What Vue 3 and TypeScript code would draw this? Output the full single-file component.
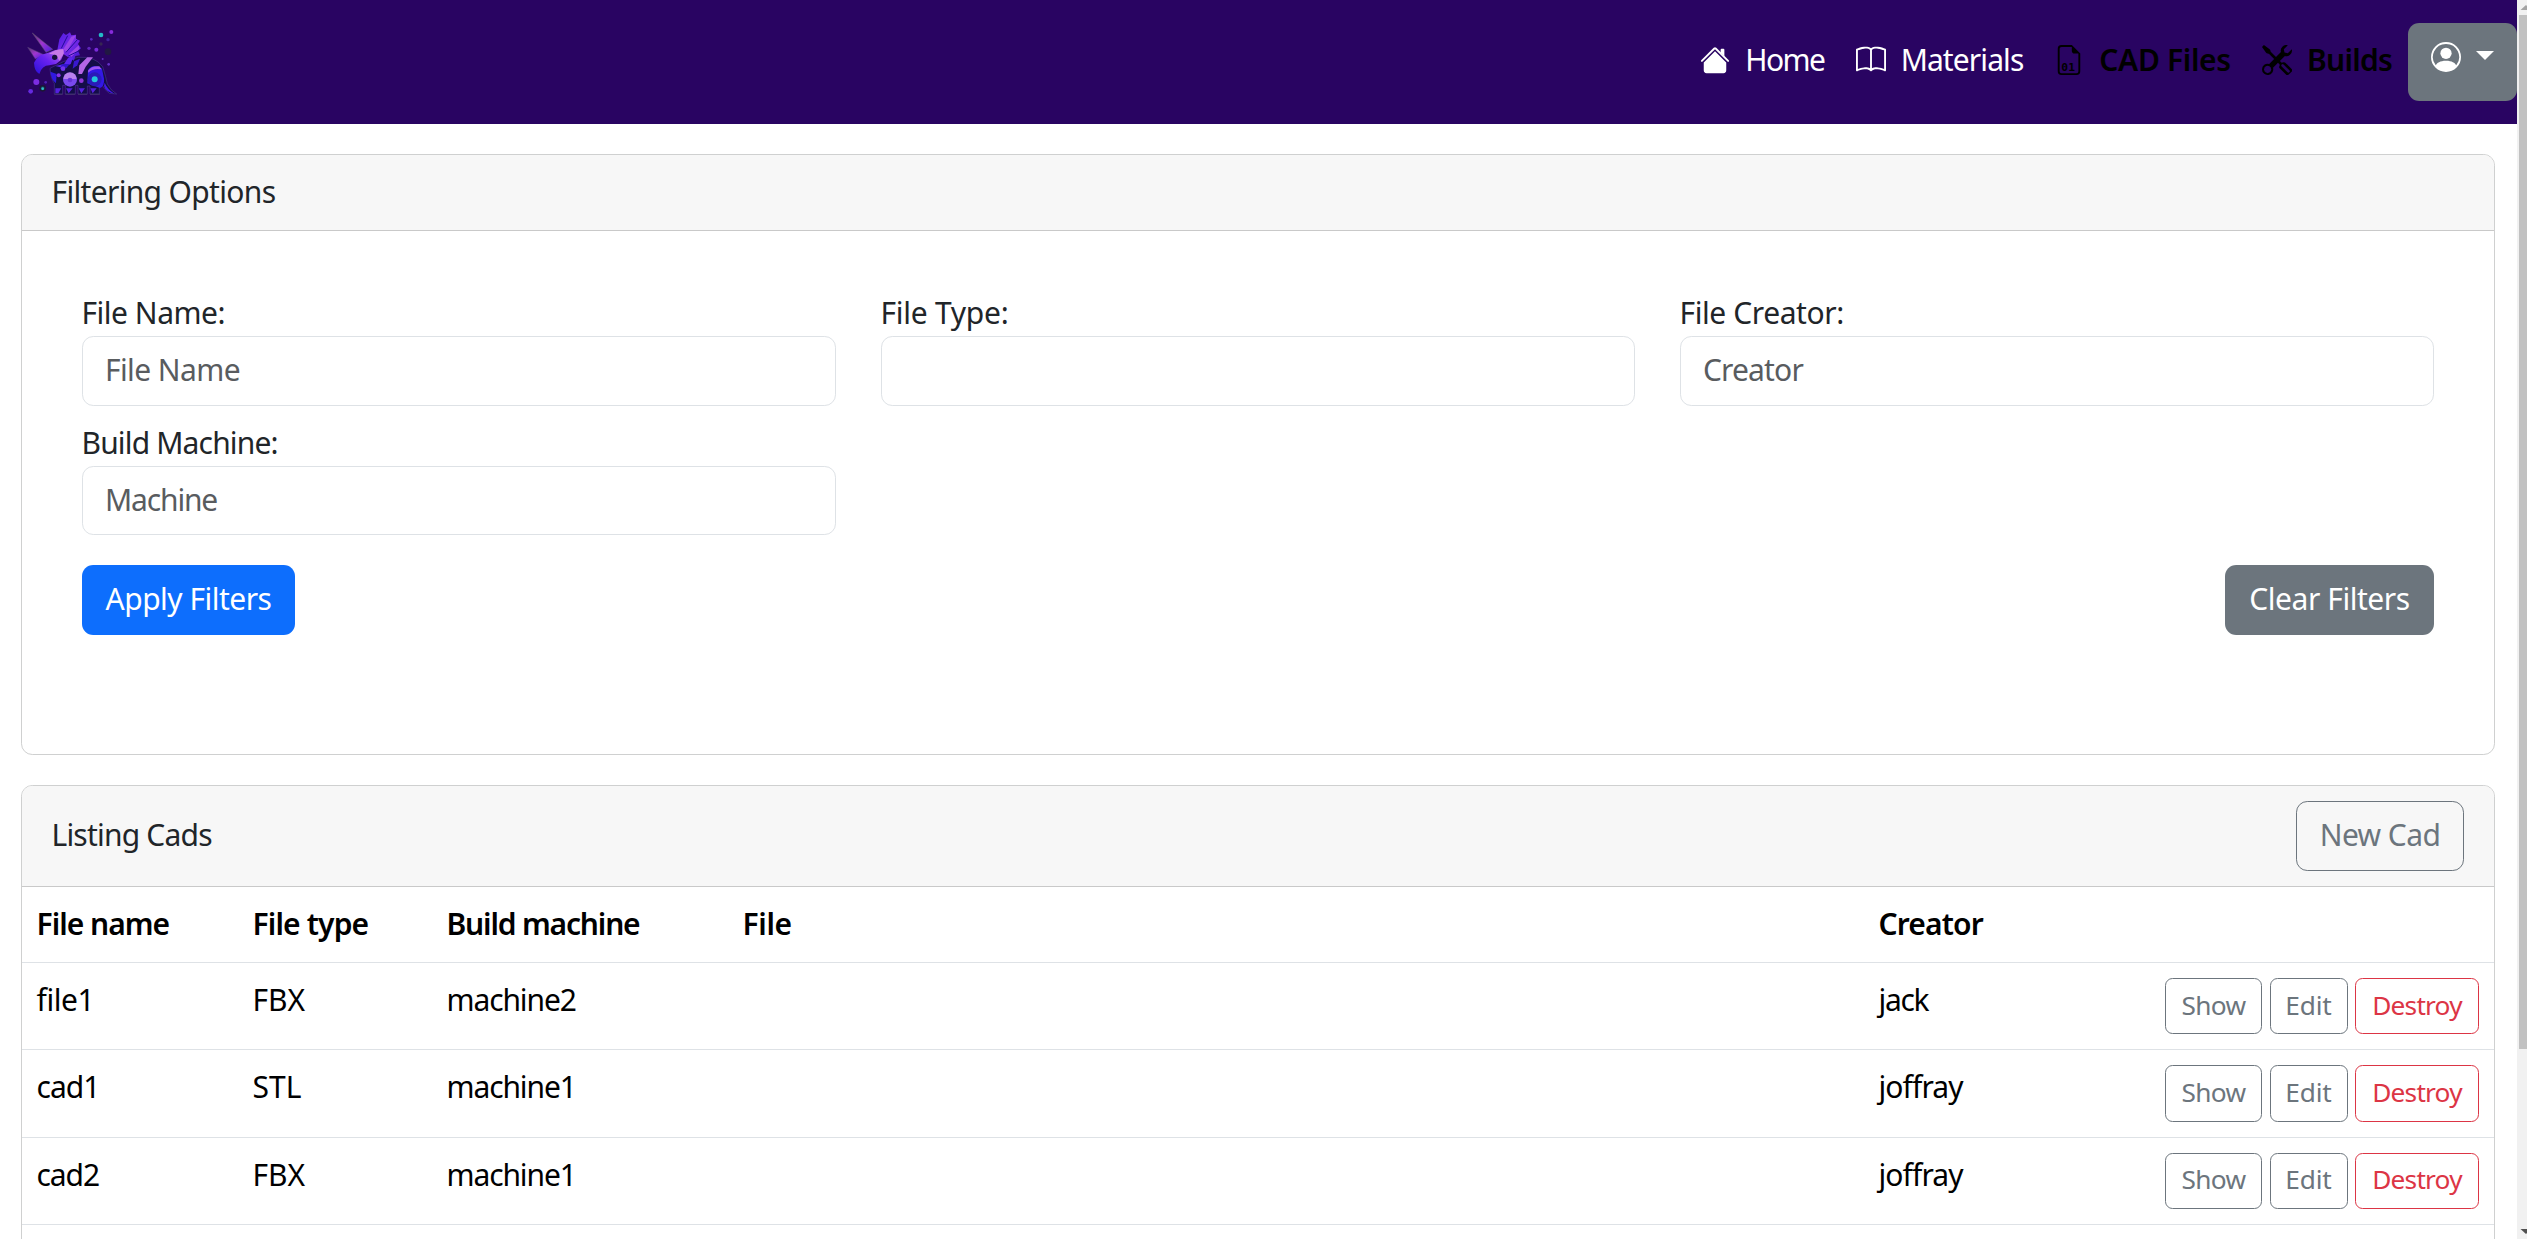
<script setup lang="ts">
interface Cad {
  name: string
  type: string
  machine: string
  creator: string
}

interface Field {
  label: string
  placeholder: string
}

const fields: Field[] = [
  { label: 'File Name:', placeholder: 'File Name' },
  { label: 'File Type:', placeholder: '' },
  { label: 'File Creator:', placeholder: 'Creator' },
  { label: 'Build Machine:', placeholder: 'Machine' },
]

const columns: string[] = ['File name', 'File type', 'Build machine', 'File', 'Creator', '']

const cads: Cad[] = [
  { name: 'file1', type: 'FBX', machine: 'machine2', creator: 'jack' },
  { name: 'cad1', type: 'STL', machine: 'machine1', creator: 'joffray' },
  { name: 'cad2', type: 'FBX', machine: 'machine1', creator: 'joffray' },
]

// Letter spacing in px, tuned per string
const tracking: Record<string, number> = {
  Home: -1.6,
  Materials: -0.9,
  'CAD Files': -0.34,
  Builds: -0.73,
  'Filtering Options': -0.67,
  'File Name:': -0.49,
  'File Name': -0.6,
  'File Type:': -0.26,
  'File Creator:': -0.41,
  Creator: -0.85,
  'Build Machine:': -0.84,
  Machine: -1.15,
  'Apply Filters': -0.51,
  'Clear Filters': -0.44,
  'Listing Cads': -0.8,
  'New Cad': -0.58,
  'File name': -0.99,
  'File type': -0.85,
  'Build machine': -1.17,
  File: -0.35,
  file1: -0.4,
  machine1: -1.12,
  machine2: -1.12,
  cad1: -0.95,
  cad2: -1.1,
  jack: -1.3,
  joffray: -0.9,
  Show: -0.66,
  Edit: -0.17,
  Destroy: -0.78,
}

const track = (text: string) => ({ letterSpacing: `${tracking[text] ?? 0}px` })
</script>

<template>
  <div class="window">
    <div class="page">
      <nav class="navbar">
        <a class="brand" aria-label="Home">
          <svg viewBox="60 60 300 240" width="100" height="80">
            <defs>
              <linearGradient id="frill" x1="0" y1="0" x2="1" y2="1">
                <stop offset="0" stop-color="#4a1ae0" />
                <stop offset=".5" stop-color="#7a2be8" />
                <stop offset="1" stop-color="#3a12d0" />
              </linearGradient>
              <linearGradient id="face" x1="0" y1="1" x2="1" y2="0">
                <stop offset="0" stop-color="#2a10d8" />
                <stop offset=".5" stop-color="#6a22f0" />
                <stop offset="1" stop-color="#c070e8" />
              </linearGradient>
              <linearGradient id="horn" x1="0" y1="0" x2="1" y2="1">
                <stop offset="0" stop-color="#5b3a70" />
                <stop offset=".5" stop-color="#a035d0" />
                <stop offset="1" stop-color="#4a1be0" />
              </linearGradient>
            </defs>
            <path d="M150 205 Q190 180 235 172 Q285 168 308 200 Q318 232 322 252 Q332 272 350 282 L328 280 Q312 268 306 254 L298 252 V282 H270 V258 H262 V282 H234 V256 H226 V282 H196 V256 H188 V282 H163 V250 Q152 236 150 205Z" fill="#140d48" stroke="#55409a" stroke-width="1.5" />
            <path d="M172 150 L178 118 L190 99 L198 105 L210 97 L214 106 L228 104 L228 116 L240 122 L234 132 L243 145 L234 152 L240 166 L226 168 L222 182 L205 172Z" fill="url(#frill)" />
            <path d="M190 148 L214 110 L228 106 L200 156Z M206 163 L236 136 L239 146 L214 170Z" fill="#9a44e8" />
            <path d="M184 145 L203 107 M198 157 L233 118 M205 168 L238 152" stroke="#200c98" stroke-width="3" />
            <path d="M97 99 L158 148 L138 157Z" fill="url(#horn)" stroke="#6a5a78" stroke-width="1.5" />
            <path d="M83 142 L132 164 L106 177Z" fill="url(#horn)" stroke="#55407a" stroke-width="1.5" />
            <path d="M102 188 Q112 164 145 158 Q168 147 190 148 L192 160 L183 180 L168 192 L148 196 Q126 196 118 222 Q103 214 102 188Z" fill="url(#face)" />
            <path d="M147 161 Q168 148 190 148 L190 162 L178 182 L168 165Z" fill="#c878e6" />
            <circle cx="164" cy="172" r="8" fill="#17103a" />
            <path d="M166 198 L192 192 L204 174 L220 172 L212 192 L190 204Z" fill="#5a24ef" />
            <path d="M186 192 L208 192 L200 204 L180 206Z" fill="#3015c8" />
            <path d="M238 196 L262 172 H279 L257 200 L246 222 H235Z" fill="#b465e6" />
            <path d="M222 184 L240 176 L232 196 L218 206Z" fill="#3a18d0" />
            <path d="M264 210 Q280 188 306 206 L312 236 Q314 258 300 264 L262 250Z" fill="#3318e4" />
            <path d="M264 212 Q276 196 298 199 L305 208 Q280 203 265 218Z" fill="#9c54f2" />
            <path d="M151 215 Q153 238 168 250 L170 222Z" fill="#3019df" />
            <circle cx="210" cy="239" r="21" fill="#7a49ee" />
            <path d="M190 237 A20 20 0 0 1 230 237Z" fill="#b880ee" />
            <circle cx="210" cy="240" r="7" fill="#6531d8" />
            <circle cx="284" cy="238" r="21" fill="#2a1ab8" />
            <circle cx="284" cy="238" r="9" fill="#22c5dc" />
            <circle cx="176" cy="226" r="6" fill="#8632e8" />
            <circle cx="189" cy="206" r="7" fill="#7132eb" />
            <circle cx="244" cy="242" r="7" fill="#9138d8" />
            <path d="M166 265 H184 L175 280 H166Z M198 265 H218 L206 280Z M236 265 H255 L244 280Z M271 265 H290 L278 280Z" fill="#5520dd" />
            <path d="M163 283 H188 M196 283 H226 M234 283 H262 M270 283 H300" stroke="#4c416e" stroke-width="2" />
            <path d="M314 248 Q322 268 343 281 Q316 275 312 258Z" fill="#4518e9" />
            <circle cx="109" cy="246" r="9" fill="#7c2ce2" />
            <circle cx="92" cy="274" r="7" fill="#6529e0" />
            <circle cx="128" cy="265" r="8" fill="#163b63" stroke="#1c1735" stroke-width="4" />
            <circle cx="128" cy="266" r="4" fill="#30bfc4" />
            <circle cx="137" cy="247" r="4" fill="#5120b5" />
            <circle cx="303" cy="105" r="7" fill="#24bac7" />
            <circle cx="334" cy="96" r="6" fill="#872bdc" />
            <circle cx="274" cy="118" r="4" fill="#5629bd" />
            <circle cx="324" cy="119" r="5" fill="#40239c" />
            <circle cx="303" cy="132" r="5" fill="#372653" />
            <circle cx="324" cy="155" r="10" fill="#211843" />
            <circle cx="289" cy="149" r="6" fill="#792bd9" />
            <circle cx="267" cy="145" r="5" fill="#6024ba" />
            <circle cx="308" cy="177" r="3" fill="#6030b9" />
            <circle cx="326" cy="193" r="4" fill="#6430c8" />
          </svg>
        </a>

        <div class="links">
          <a class="link">
            <svg class="icon" viewBox="0 0 16 16" fill="currentColor">
              <path fill-rule="evenodd" d="m8 3.293 6 6V13.5a1.5 1.5 0 0 1-1.5 1.5h-9A1.5 1.5 0 0 1 2 13.5V9.293l6-6zm5-.793V6l-2-2V2.5a.5.5 0 0 1 .5-.5h1a.5.5 0 0 1 .5.5z" />
              <path fill-rule="evenodd" d="M7.293 1.5a1 1 0 0 1 1.414 0l6.647 6.646a.5.5 0 0 1-.708.708L8 2.207 1.354 8.854a.5.5 0 1 1-.708-.708L7.293 1.5z" />
            </svg>
            <span :style="track('Home')">Home</span>
          </a>
          <a class="link">
            <svg class="icon" viewBox="0 0 16 16" fill="currentColor">
              <path d="M1 2.828c.885-.37 2.154-.769 3.388-.893 1.33-.134 2.458.063 3.112.752v9.746c-.935-.53-2.12-.603-3.213-.493-1.18.12-2.37.461-3.287.811V2.828zm7.5-.141c.654-.689 1.782-.886 3.112-.752 1.234.124 2.503.523 3.388.893v9.923c-.918-.35-2.107-.692-3.287-.81-1.094-.111-2.278-.039-3.213.492V2.687zM8 1.783C7.015.936 5.587.81 4.287.94c-1.514.153-3.042.672-3.994 1.105A.5.5 0 0 0 0 2.5v11a.5.5 0 0 0 .707.455c.882-.4 2.303-.881 3.68-1.02 1.409-.142 2.59.087 3.223.877a.5.5 0 0 0 .78 0c.633-.79 1.814-1.019 3.222-.877 1.378.139 2.8.62 3.681 1.02A.5.5 0 0 0 16 13.5v-11a.5.5 0 0 0-.293-.455c-.952-.433-2.48-.952-3.994-1.105C10.413.809 8.985.936 8 1.783z" />
            </svg>
            <span :style="track('Materials')">Materials</span>
          </a>
          <a class="link strong">
            <svg class="icon" viewBox="0 0 16 16" fill="currentColor">
              <path d="M14 4.5V14a2 2 0 0 1-2 2H4a2 2 0 0 1-2-2V2a2 2 0 0 1 2-2h5.5L14 4.5zm-3 0A1.5 1.5 0 0 1 9.5 3V1H4a1 1 0 0 0-1 1v12a1 1 0 0 0 1 1h8a1 1 0 0 0 1-1V4.5h-2z" />
              <text class="bits" x="3.9" y="14">01</text>
            </svg>
            <span :style="track('CAD Files')">CAD Files</span>
          </a>
          <a class="link strong">
            <svg class="icon" viewBox="0 0 16 16" fill="currentColor">
              <path fill-rule="evenodd" d="M1 0 0 1l2.2 3.081a1 1 0 0 0 .815.419h.07a1 1 0 0 1 .708.293l2.675 2.675-2.617 2.654A3.003 3.003 0 0 0 0 13a3 3 0 1 0 5.878-.851l2.654-2.617.968.968-.305.914a1 1 0 0 0 .242 1.023l3.356 3.356a1 1 0 0 0 1.414 0l1.586-1.586a1 1 0 0 0 0-1.414l-3.356-3.356a1 1 0 0 0-1.023-.242L10.5 9.5l-.96-.96 2.68-2.643A3.005 3.005 0 0 0 16 3c0-.269-.035-.53-.102-.777l-2.14 2.141L12 4l-.364-1.757L13.777.102a3 3 0 0 0-3.675 3.68L7.462 6.46 4.793 3.793a1 1 0 0 1-.293-.707v-.071a1 1 0 0 0-.419-.814L1 0zm9.5 10.4a.7.7 0 0 1 1 0l3.1 3.1a.7.7 0 0 1-1 1l-3.1-3.1a.7.7 0 0 1 0-1zM3 11l.471.242.529.026.287.445.445.287.026.529L5 13l-.242.471-.026.529-.445.287-.287.445-.529.026L3 15l-.471-.242L2 14.732l-.287-.445L1.268 14l-.026-.529L1 13l.242-.471.026-.529.445-.287.287-.445.529-.026L3 11z" />
            </svg>
            <span :style="track('Builds')">Builds</span>
          </a>
          <button class="user" type="button" aria-label="Account">
            <svg class="icon" viewBox="0 0 16 16" fill="currentColor">
              <path d="M11 6a3 3 0 1 1-6 0 3 3 0 0 1 6 0z" />
              <path fill-rule="evenodd" d="M0 8a8 8 0 1 1 16 0A8 8 0 0 1 0 8zm8-7a7 7 0 0 0-5.468 11.37C3.242 11.226 4.805 10 8 10s4.757 1.225 5.468 2.37A7 7 0 0 0 8 1z" />
            </svg>
            <span class="caret"></span>
          </button>
        </div>
      </nav>

      <main class="content">
        <section class="card filters">
          <header class="card-header">
            <span :style="track('Filtering Options')">Filtering Options</span>
          </header>
          <form class="filter-form">
            <div class="fields">
              <label v-for="field in fields" :key="field.label" class="field">
                <span class="label" :style="track(field.label)">{{ field.label }}</span>
                <input
                  class="input"
                  type="text"
                  :placeholder="field.placeholder"
                  :style="track(field.placeholder)"
                />
              </label>
            </div>
            <div class="form-actions">
              <button class="btn primary" type="button" :style="track('Apply Filters')">Apply Filters</button>
              <button class="btn secondary" type="button" :style="track('Clear Filters')">Clear Filters</button>
            </div>
          </form>
        </section>

        <section class="card listing">
          <header class="card-header">
            <span :style="track('Listing Cads')">Listing Cads</span>
            <button class="btn outline new" type="button" :style="track('New Cad')">New Cad</button>
          </header>
          <div class="table" role="table">
            <div class="row head" role="row">
              <span v-for="column in columns" :key="column" class="cell" role="columnheader" :style="track(column)">{{ column }}</span>
            </div>
            <div v-for="cad in cads" :key="cad.name" class="row" role="row">
              <span class="cell" role="cell" :style="track(cad.name)">{{ cad.name }}</span>
              <span class="cell" role="cell">{{ cad.type }}</span>
              <span class="cell" role="cell" :style="track(cad.machine)">{{ cad.machine }}</span>
              <span class="cell" role="cell"></span>
              <span class="cell" role="cell" :style="track(cad.creator)">{{ cad.creator }}</span>
              <span class="cell actions" role="cell">
                <button class="btn small outline show" type="button" :style="track('Show')">Show</button>
                <button class="btn small outline edit" type="button" :style="track('Edit')">Edit</button>
                <button class="btn small danger" type="button" :style="track('Destroy')">Destroy</button>
              </span>
            </div>
          </div>
        </section>
      </main>
    </div>

    <div class="scrollbar" aria-hidden="true">
      <svg class="arrow" width="10" height="15" viewBox="0 0 10 15"><path d="M3.5 10 9 5 14.5 10z" fill="#a3a3a3" /></svg>
      <div class="thumb"></div>
      <svg class="arrow down" width="10" height="15" viewBox="0 0 10 15"><path d="M3.5 5 9 10 14.5 5z" fill="#505050" /></svg>
    </div>
  </div>
</template>

<style>
html,
body {
  margin: 0;
  overflow: hidden;
  background: #fff;
}
</style>

<style scoped>
.window,
.window * {
  box-sizing: border-box;
}

.window {
  display: flex;
  width: 2527px;
  height: 1239px;
  overflow: hidden;
  font-family: 'Noto Sans', 'Open Sans', sans-serif;
  font-size: 30px;
  line-height: 45px;
  color: #212529;
}

.page {
  width: 2517px;
  height: 1239px;
  overflow: hidden;
}

.navbar {
  display: flex;
  justify-content: space-between;
  height: 124px;
  background: #290462;
}

.brand {
  padding: 20px 0 0 20px;
}

.brand svg {
  display: block;
}

.links {
  display: grid;
  grid-template-columns: 155.3px 198.7px 207.7px 146px 109px;
  align-items: center;
}

.link {
  display: flex;
  align-items: center;
  gap: 15px;
  margin-bottom: 4px;
  color: #fff;
}

.link span {
  padding-bottom: 1px;
}

.link.strong {
  color: #000;
  font-weight: 600;
}

.icon {
  display: block;
  flex: none;
  width: 30px;
  height: 30px;
}

.bits {
  font: bold 6px 'DejaVu Sans Mono', monospace;
  letter-spacing: 0.1px;
}

.user {
  display: flex;
  align-items: flex-start;
  gap: 15px;
  width: 109px;
  height: 78px;
  padding: 19px 0 0 23px;
  border: 0;
  border-radius: 11.25px;
  background: #6c757d;
  color: #fff;
}

.caret {
  margin-top: 9px;
  border-top: 9px solid #fff;
  border-right: 9px solid transparent;
  border-left: 9px solid transparent;
}

.content {
  display: flex;
  flex-direction: column;
  gap: 30px;
  padding: 30px 22px 0 21px;
}

.card {
  border: 1px solid #cfd0d0;
  border-radius: 11.25px;
  background: #fff;
  overflow: hidden;
}

.filters {
  height: 601px;
}

.listing {
  height: 640px;
}

.card-header {
  display: flex;
  align-items: center;
  justify-content: space-between;
  padding: 15px 30px 15px 29.5px;
  border-bottom: 1px solid #c9c9c9;
  background: #f7f7f7;
}

.card-header > span {
  margin: -1px 0 1px;
}

.filter-form {
  padding: 60px;
}

.fields {
  display: grid;
  grid-template-columns: repeat(3, 754px);
  gap: 15px 45px;
}

.field {
  display: flex;
  flex-direction: column;
}

.label {
  height: 45px;
  margin: -1px 0 1px -0.5px;
}

.input {
  width: 100%;
  height: 69.5px;
  padding: 10.5px 22px 12.5px;
  border: 1px solid #dee2e6;
  border-radius: 11.25px;
  outline: 0;
  background: #fff;
  font: inherit;
  color: #212529;
}

.input::placeholder {
  color: #595c5f;
  opacity: 1;
}

.form-actions {
  display: flex;
  justify-content: space-between;
  margin-top: 30px;
}

.btn {
  height: 69.5px;
  padding: 0 0 2px;
  border: 1px solid transparent;
  border-radius: 11.25px;
  background: none;
  font: inherit;
  line-height: 45px;
  text-align: center;
  white-space: nowrap;
}

.primary {
  width: 213px;
  background: #0d6efd;
  color: #fff;
}

.secondary {
  width: 209px;
  background: #6c757d;
  color: #fff;
}

.outline {
  border-color: #6c757d;
  color: #6c757d;
}

.new {
  width: 168px;
}

.danger {
  width: 124px;
  border-color: #dc3545;
  color: #dc3545;
}

.row {
  display: grid;
  grid-template-columns: 216px 194px 296px 1136px 216px 1fr;
  height: 87.33px;
  border-bottom: 1px solid #dee2e6;
  color: #000;
}

.head {
  height: 76.5px;
  font-weight: 600;
}

.cell {
  padding: 14px 15px 0 14.5px;
}

.actions {
  display: flex;
  justify-content: flex-end;
  gap: 7.5px;
  padding: 15px 15px 0 0;
}

.small {
  height: 56.4px;
  border-radius: 7.5px;
  font-size: 26.25px;
  line-height: 39px;
}

.show {
  width: 97px;
}

.edit {
  width: 78px;
}

.scrollbar {
  display: flex;
  flex-direction: column;
  width: 10px;
  height: 1239px;
  background: #f1f1f1;
}

.arrow {
  display: block;
  flex: none;
}

.thumb {
  width: 8px;
  height: 1034px;
  margin-left: 2px;
  background: #c1c1c1;
}

.down {
  margin-top: auto;
}
</style>
